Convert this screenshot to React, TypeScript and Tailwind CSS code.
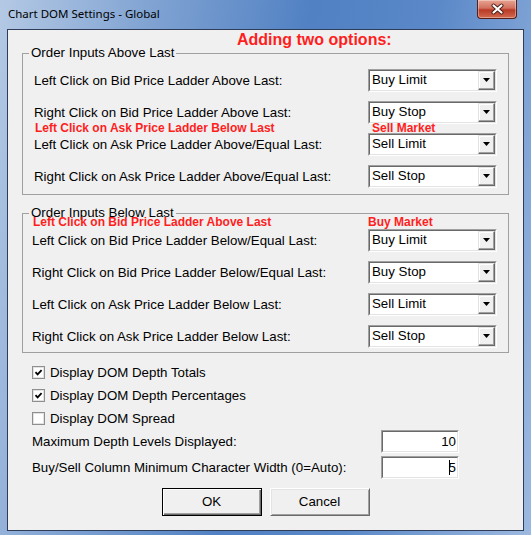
import type { ReactNode } from "react";

function Sunken({ className = "", children }: { className?: string; children?: ReactNode }) {
  return (
    <div className={`border border-t-[#a0a0a0] border-l-[#a0a0a0] border-r-white border-b-white ${className}`}>
      <div className="h-full w-full border border-t-[#696969] border-l-[#696969] border-r-[#e3e3e3] border-b-[#e3e3e3] bg-white">
        {children}
      </div>
    </div>
  );
}

function Dropdown({ value }: { value: string }) {
  return (
    <Sunken className="h-[23px] w-[129px] shrink-0">
      <div className="flex h-full items-center">
        <span className="flex-1 pl-[2px] text-[13.3px] leading-none text-black">{value}</span>
        <div className="flex h-full w-[17px] items-center justify-center border border-t-[#e3e3e3] border-l-[#e3e3e3] border-r-[#696969] border-b-[#696969] bg-[#f0f0f0] shadow-[inset_-1px_-1px_0_#a0a0a0,inset_1px_1px_0_#fff]">
          <svg width="7" height="4" viewBox="0 0 7 4">
            <path d="M0 0h7L3.5 4z" fill="#000" />
          </svg>
        </div>
      </div>
    </Sunken>
  );
}

function Row({ label, value }: { label: string; value: string }) {
  return (
    <div className="flex h-[32px] items-center justify-between">
      <span className="pt-[1px]">{label}</span>
      <Dropdown value={value} />
    </div>
  );
}

function Check({ checked, label }: { checked?: boolean; label: string }) {
  return (
    <div className="flex h-[23px] items-center gap-[5px]">
      <div className="flex h-[13px] w-[13px] items-center justify-center border border-[#8e8f8f] bg-white shadow-[inset_0_0_0_1px_#e2e2e2]">
        {checked && (
          <svg width="9" height="9" viewBox="0 0 9 9">
            <path d="M1.5 4.2 3.6 6.4 7.6 2.2" fill="none" stroke="#000" strokeWidth="1.8" />
          </svg>
        )}
      </div>
      <span>{label}</span>
    </div>
  );
}

const above = [
  ["Left Click on Bid Price Ladder Above Last:", "Buy Limit"],
  ["Right Click on Bid Price Ladder Above Last:", "Buy Stop"],
  ["Left Click on Ask Price Ladder Above/Equal Last:", "Sell Limit"],
  ["Right Click on Ask Price Ladder Above/Equal Last:", "Sell Stop"],
];

const below = [
  ["Left Click on Bid Price Ladder Below/Equal Last:", "Buy Limit"],
  ["Right Click on Bid Price Ladder Below/Equal Last:", "Buy Stop"],
  ["Left Click on Ask Price Ladder Below Last:", "Sell Limit"],
  ["Right Click on Ask Price Ladder Below Last:", "Sell Stop"],
];

export default function App() {
  return (
    <div className="relative flex h-[535px] w-[531px] flex-col bg-[linear-gradient(100deg,#b4c9e4_0%,#7fa2d2_25%,#5181c3_50%,#5a88c8_70%,#9db9df_100%)] font-['Liberation_Sans',Arial,sans-serif] text-[13.3px] text-black">
      {/* title bar */}
      <div className="flex h-[29px] shrink-0 items-start">
        <span className="pl-[8px] pt-[6px] font-['Noto_Sans',sans-serif] text-[11.5px] leading-[16px] text-black">
          Chart DOM Settings - Global
        </span>
        <div className="ml-auto mr-[14px] flex h-[19px] w-[40px] items-center justify-center rounded-b-[4px] border border-t-0 border-[#5a1e16] bg-[linear-gradient(to_bottom,#e8a493_0%,#d2705e_45%,#b93a26_55%,#d36a4f_100%)] shadow-[inset_0_0_0_1px_rgba(255,255,255,0.35)]">
          <svg width="13" height="12" viewBox="0 0 13 12">
            <path d="M2.5 2.5 10.5 9.5M10.5 2.5 2.5 9.5" stroke="#4a1a12" strokeWidth="4" strokeLinecap="round" />
            <path d="M2.5 2.5 10.5 9.5M10.5 2.5 2.5 9.5" stroke="#fff" strokeWidth="2.2" strokeLinecap="round" />
          </svg>
        </div>
      </div>

      {/* client area */}
      <div className="mx-[7px] flex h-[502px] flex-col border border-[#2f3d58] bg-[#f0f0f0]">
        <div className="mt-[1px] h-[14px] pl-[229px] text-[16px] font-bold leading-[18px] text-[#ff1e1e]">
          Adding two options:
        </div>

        <fieldset className="ml-[14px] w-[487px] border border-[#a0a0a0]">
          <legend className="ml-[6px] px-[2px] leading-[16px]">Order Inputs Above Last</legend>
          <div className="pb-[2px] pl-[11px] pr-[11px] pt-[3px]">
            {above.map(([l, v]) => (
              <Row key={l} label={l} value={v} />
            ))}
          </div>
        </fieldset>

        <fieldset className="ml-[14px] mt-[10px] w-[487px] border border-[#a0a0a0]">
          <legend className="ml-[6px] px-[2px] leading-[16px]">Order Inputs Below Last</legend>
          <div className="pl-[9px] pr-[11px] pt-[3px]">
            {below.map(([l, v]) => (
              <Row key={l} label={l} value={v} />
            ))}
          </div>
        </fieldset>

        <div className="mt-[8px] pl-[24px]">
          <Check checked label="Display DOM Depth Totals" />
          <Check checked label="Display DOM Depth Percentages" />
          <Check label="Display DOM Spread" />

          <div className="flex h-[23px] w-[427px] items-center justify-between">
            <span>Maximum Depth Levels Displayed:</span>
            <Sunken className="h-[23px] w-[78px]">
              <div className="flex h-full items-center justify-end pr-[1px] leading-none">10</div>
            </Sunken>
          </div>
          <div className="mt-[3px] flex h-[23px] w-[427px] items-center justify-between">
            <span>Buy/Sell Column Minimum Character Width (0=Auto):</span>
            <Sunken className="h-[23px] w-[78px]">
              <div className="flex h-full items-center justify-end pr-[1px] leading-none">
                <span className="mr-[-1px] h-[15px] w-px bg-black" />
                5
              </div>
            </Sunken>
          </div>
        </div>

        <div className="mt-[9px] flex justify-center gap-[8px]">
          <button className="h-[28px] w-[100px] border border-black bg-[#f0f0f0] shadow-[inset_1px_1px_0_#fff,inset_-1px_-1px_0_#696969,inset_-2px_-2px_0_#a0a0a0]">
            OK
          </button>
          <button className="h-[28px] w-[100px] border border-t-white border-l-white border-r-[#696969] border-b-[#696969] bg-[#f0f0f0] shadow-[inset_1px_1px_0_#e3e3e3,inset_-1px_-1px_0_#a0a0a0]">
            Cancel
          </button>
        </div>
      </div>

      {/* red annotations drawn over the dialog */}
      <span className="absolute left-[35px] top-[121px] text-[12px] font-bold leading-[14px] text-[#ff1e1e]">
        Left Click on Ask Price Ladder Below Last
      </span>
      <span className="absolute left-[372px] top-[121px] text-[12px] font-bold leading-[14px] text-[#ff1e1e]">
        Sell Market
      </span>
      <span className="absolute left-[33px] top-[215px] text-[12px] font-bold leading-[14px] text-[#ff1e1e]">
        Left Click on Bid Price Ladder Above Last
      </span>
      <span className="absolute left-[368px] top-[215px] text-[12px] font-bold leading-[14px] text-[#ff1e1e]">
        Buy Market
      </span>
    </div>
  );
}
